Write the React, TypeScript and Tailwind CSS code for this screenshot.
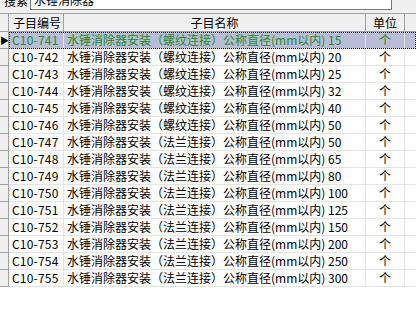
import React from "react";

type Row = { code: string; kind: string; size: string };

const rows: Row[] = [
  { code: "C10-741", kind: "螺纹连接", size: "15" },
  { code: "C10-742", kind: "螺纹连接", size: "20" },
  { code: "C10-743", kind: "螺纹连接", size: "25" },
  { code: "C10-744", kind: "螺纹连接", size: "32" },
  { code: "C10-745", kind: "螺纹连接", size: "40" },
  { code: "C10-746", kind: "螺纹连接", size: "50" },
  { code: "C10-747", kind: "法兰连接", size: "50" },
  { code: "C10-748", kind: "法兰连接", size: "65" },
  { code: "C10-749", kind: "法兰连接", size: "80" },
  { code: "C10-750", kind: "法兰连接", size: "100" },
  { code: "C10-751", kind: "法兰连接", size: "125" },
  { code: "C10-752", kind: "法兰连接", size: "150" },
  { code: "C10-753", kind: "法兰连接", size: "200" },
  { code: "C10-754", kind: "法兰连接", size: "250" },
  { code: "C10-755", kind: "法兰连接", size: "300" },
];

const font = { fontFamily: '"Noto Sans CJK SC", "Liberation Sans", sans-serif' };

function GridRow({ row, selected }: { row: Row; selected: boolean }) {
  const text = selected ? "text-[#23892a]" : "text-black";
  return (
    <div className="flex h-[17px]">
      {/* indicator */}
      <div className="w-[9px] shrink-0 border-r border-b border-[#a0a0a0] bg-[#f0f0f0] flex items-center text-[9px] leading-none">
        {selected ? "▶" : ""}
      </div>
      <div
        className={`flex flex-1 border-b border-[#e4e4e4] ${
          selected ? "bg-[#b9bdd6] outline outline-1 outline-dotted outline-black -outline-offset-1" : "bg-white"
        } ${text} text-[12px] leading-[16px]`}
      >
        <div className="w-[55px] shrink-0 pl-[3px] tracking-[0.2px] border-r border-[#e4e4e4]">{row.code}</div>
        <div className="w-[302px] shrink-0 pl-[3px] border-r border-[#e4e4e4] whitespace-pre">
          {`水锤消除器安装（${row.kind}）公称直径(mm以内) ${row.size}`}
        </div>
        <div className="w-[39px] shrink-0 text-center border-r border-[#e4e4e4]">个</div>
        <div className="flex-1" />
      </div>
    </div>
  );
}

export default function App() {
  return (
    <div className="w-[416px] h-[319px] bg-white overflow-hidden" style={font}>
      {/* search bar, scrolled partly out of view */}
      <div className="h-[13px] bg-[#f0f0f0] overflow-hidden flex items-end gap-[2px] pl-[4px]">
        <div className="text-[12px] leading-[18px] mb-[3px]">搜索</div>
        <div className="w-[362px] h-[22px] mb-[3px] bg-white border border-[#7a7a7a] text-[12px] leading-[18px] pl-[3px] pt-[2px]">
          水锤消除器
        </div>
      </div>

      {/* grid */}
      <div className="border-t border-[#a0a0a0]">
        {/* header */}
        <div className="flex h-[18px] bg-[#f0f0f0] border-b border-[#a0a0a0] text-[12px] leading-[17px] text-black">
          <div className="w-[9px] shrink-0 border-r border-[#a0a0a0]" />
          <div className="w-[55px] shrink-0 pl-[4px] border-r border-[#a0a0a0]">子目编号</div>
          <div className="w-[302px] shrink-0 text-center border-r border-[#a0a0a0]">子目名称</div>
          <div className="w-[39px] shrink-0 text-center border-r border-[#a0a0a0]">单位</div>
          <div className="flex-1" />
        </div>
        {rows.map((r, i) => (
          <GridRow key={r.code} row={r} selected={i === 0} />
        ))}
      </div>
    </div>
  );
}
